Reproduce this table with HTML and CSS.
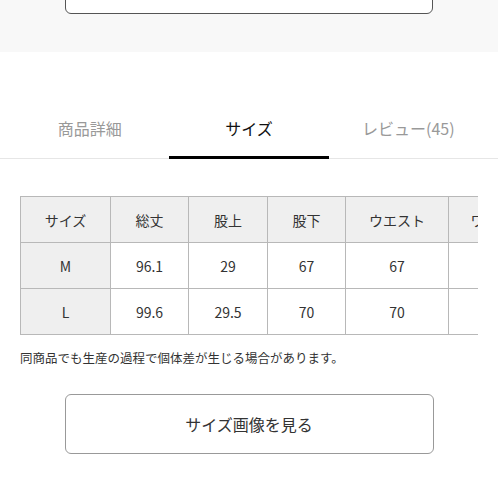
FILE: index.html
```html
<!DOCTYPE html>
<html lang="ja">
<head>
<meta charset="utf-8">
<link rel="stylesheet" href="styles.css">
</head>
<body>
<div class="top">
  <div class="top-btn"></div>
</div>
<nav class="tabs">
  <div class="tab">商品詳細</div>
  <div class="tab active">サイズ</div>
  <div class="tab">レビュー(45)</div>
</nav>
<section class="size">
  <div class="table-wrap">
    <table class="size-table">
      <colgroup>
        <col class="c1"><col class="c2"><col class="c3"><col class="c4"><col class="c5"><col class="c6">
      </colgroup>
      <thead>
        <tr><th>サイズ</th><th>総丈</th><th>股上</th><th>股下</th><th>ウエスト</th><th>ワタリ幅</th></tr>
      </thead>
      <tbody>
        <tr><th>M</th><td>96.1</td><td>29</td><td>67</td><td>67</td><td></td></tr>
        <tr><th>L</th><td>99.6</td><td>29.5</td><td>70</td><td>70</td><td></td></tr>
      </tbody>
    </table>
  </div>
  <p class="note">同商品でも生産の過程で個体差が生じる場合があります。</p>
  <div class="btn-row"><button class="size-btn">サイズ画像を見る</button></div>
</section>
</body>
</html>
```
FILE: styles.css
```css
html, body {
  margin: 0;
  padding: 0;
  background: #fff;
  font-family: "Noto Sans CJK JP", "Noto Sans", sans-serif;
  color: #333;
}
.top {
  background: #f8f8f8;
  height: 52px;
  display: flex;
  justify-content: center;
}
.top-btn {
  width: 366px;
  height: 50px;
  margin-top: -38px;
  background: #fff;
  border: 1px solid #555;
  border-radius: 6px;
}
.tabs {
  margin-top: 56px;
  padding: 0 10px;
  display: grid;
  grid-template-columns: repeat(3, 1fr);
  border-bottom: 1px solid #e6e6e6;
}
.tab {
  position: relative;
  height: 50px;
  box-sizing: border-box;
  padding-top: 10px;
  font-size: 16px;
  line-height: 20px;
  text-align: center;
  color: #999;
}
.tab.active {
  color: #111;
}
.tab.active::after {
  content: "";
  position: absolute;
  left: 0;
  right: 0;
  bottom: -1px;
  height: 3px;
  background: #000;
}
.size {
  padding: 37px 20px 0;
}
.table-wrap {
  overflow: hidden;
}
.size-table {
  border-collapse: collapse;
  table-layout: fixed;
  width: 528px;
  font-size: 14px;
  color: #333;
}
.size-table th, .size-table td {
  border: 1px solid #b8b8b8;
  height: 45px;
  padding: 0;
  text-align: center;
  font-weight: normal;
  white-space: nowrap;
  overflow: hidden;
}
.size-table thead th {
  background: #efefef;
}
.size-table tbody th {
  background: #efefef;
}
.c1 { width: 90px; }
.c2 { width: 78px; }
.c3 { width: 79px; }
.c4 { width: 78px; }
.c5 { width: 103px; }
.c6 { width: 100px; }
.note {
  margin: 14px 0 0;
  font-size: 12.5px;
  line-height: 18px;
  color: #333;
}
.btn-row {
  display: flex;
  justify-content: center;
  margin-top: 27px;
}
.size-btn {
  width: 369px;
  height: 60px;
  background: #fff;
  border: 1px solid #999;
  border-radius: 6px;
  font-family: "Noto Sans CJK JP", "Noto Sans", sans-serif;
  font-size: 16px;
  color: #333;
}
```
